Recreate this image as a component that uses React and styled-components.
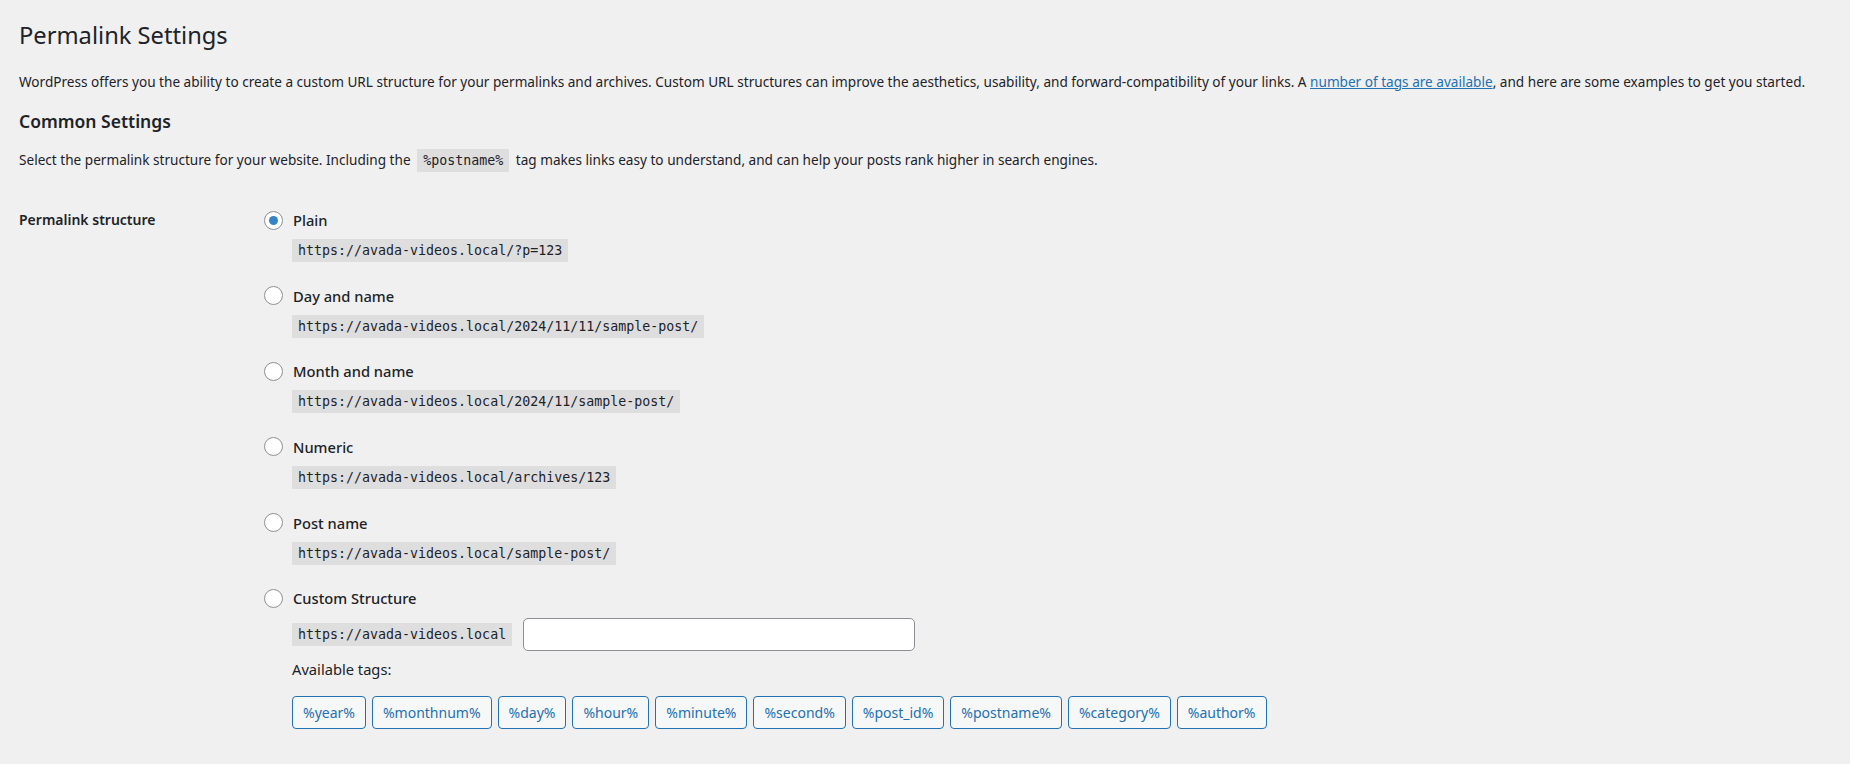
import styled, { createGlobalStyle } from 'styled-components'

const GlobalStyle = createGlobalStyle`
    html, body {
        margin: 0;
        padding: 0;
        background: #f0f0f1;
    }
    body {
        font-family: 'Noto Sans', 'Open Sans', sans-serif;
        color: #1d2327;
        font-size: 14px;
    }
`;

const Wrap = styled.div`
    padding: 20px 19px 30px 19px;
`;

const Title = styled.h1`
    font-size: 23.7px;
    font-weight: 400;
    line-height: 1.3;
    margin: 0 0 21px 0;
`;

const Text = styled.p`
    font-size: 13.6px;
    line-height: 1.5;
    margin: 0 0 ${({ gap }) => gap || 14}px 0;

    a {
        color: #2271b1;
    }
`;

const SubTitle = styled.h2`
    font-size: 17.5px;
    font-weight: 600;
    margin: 0 0 16px 0;
`;

const Code = styled.code`
    font-family: 'DejaVu Sans Mono', 'Liberation Mono', monospace;
    font-size: 13.3px;
    background: rgba(0, 0, 0, 0.075);
    padding: 3px 6px 3px 6px;
    margin: ${({ inline }) => inline ? '0 3px' : '0'};
    display: inline-block;
    line-height: 17px;
`;

const FormRow = styled.div`
    display: grid;
    grid-template-columns: 245px 1fr;
    margin-top: 34px;
`;

const Label = styled.div`
    font-size: 14px;
    font-weight: 600;
    line-height: 24px;
    padding-top: 2px;
`;

const Options = styled.div`
    display: flex;
    flex-direction: column;
    gap: 19.6px;
`;

const Option = styled.div`
    display: flex;
    flex-direction: column;
    gap: 5px;
`;

const OptionHead = styled.label`
    display: flex;
    align-items: center;
    gap: 10px;
    font-size: 14.7px;
    font-weight: 500;
    line-height: 28px;
`;

// radio circle, filled dot when selected
const Radio = styled.span`
    width: 17px;
    height: 17px;
    border-radius: 50%;
    border: 1px solid #8c8f94;
    background: #fff;
    display: flex;
    align-items: center;
    justify-content: center;

    &::after {
        content: '';
        display: ${({ checked }) => checked ? 'block' : 'none'};
        width: 9px;
        height: 9px;
        border-radius: 50%;
        background: #3582c4;
    }
`;

const Indent = styled.div`
    padding-left: 28px;
    display: flex;
    flex-direction: column;
    align-items: flex-start;
    gap: 6px;
`;

const CustomLine = styled.div`
    display: flex;
    align-items: center;
    gap: 11px;
    margin-top: 1px;
`;

const Input = styled.input`
    width: 392px;
    height: 33px;
    box-sizing: border-box;
    border: 1px solid #8c8f94;
    border-radius: 5px;
    background: #fff;
`;

const TagsLabel = styled.div`
    font-size: 14.7px;
    line-height: 24px;
`;

const Tags = styled.div`
    display: flex;
    gap: 6px;
    margin-top: 9px;
`;

const TagButton = styled.button`
    font-family: 'Noto Sans', 'Open Sans', sans-serif;
    font-size: 14px;
    color: #2271b1;
    background: #f6f7f7;
    border: 1px solid #2271b1;
    border-radius: 4px;
    height: 33px;
    padding: 0 10px;
    cursor: pointer;
`;

const structures = [
    { name: 'Plain', url: 'https://avada-videos.local/?p=123', checked: true },
    { name: 'Day and name', url: 'https://avada-videos.local/2024/11/11/sample-post/' },
    { name: 'Month and name', url: 'https://avada-videos.local/2024/11/sample-post/' },
    { name: 'Numeric', url: 'https://avada-videos.local/archives/123' },
    { name: 'Post name', url: 'https://avada-videos.local/sample-post/' },
];

const tags = ['%year%', '%monthnum%', '%day%', '%hour%', '%minute%', '%second%', '%post_id%', '%postname%', '%category%', '%author%'];

const App = () => {
    return (
        <>
            <GlobalStyle/>
            <Wrap>
                <Title>Permalink Settings</Title>
                <Text gap={17}>
                    WordPress offers you the ability to create a custom URL structure for your permalinks and archives. Custom URL structures can improve the aesthetics, usability, and forward-compatibility of your links. A <a href="#">number of tags are available</a>, and here are some examples to get you started.
                </Text>
                <SubTitle>Common Settings</SubTitle>
                <Text>
                    Select the permalink structure for your website. Including the <Code inline>%postname%</Code> tag makes links easy to understand, and can help your posts rank higher in search engines.
                </Text>
                <FormRow>
                    <Label>Permalink structure</Label>
                    <Options>
                        {structures.map((s) => (
                            <Option key={s.name}>
                                <OptionHead>
                                    <Radio checked={s.checked}/>
                                    {s.name}
                                </OptionHead>
                                <Indent>
                                    <Code>{s.url}</Code>
                                </Indent>
                            </Option>
                        ))}
                        <Option>
                            <OptionHead>
                                <Radio/>
                                Custom Structure
                            </OptionHead>
                            <Indent>
                                <CustomLine>
                                    <Code>https://avada-videos.local</Code>
                                    <Input type={`text`}/>
                                </CustomLine>
                                <TagsLabel>Available tags:</TagsLabel>
                                <Tags>
                                    {tags.map((t) => (
                                        <TagButton key={t} type={`button`}>{t}</TagButton>
                                    ))}
                                </Tags>
                            </Indent>
                        </Option>
                    </Options>
                </FormRow>
            </Wrap>
        </>
    );
};

export default App;
